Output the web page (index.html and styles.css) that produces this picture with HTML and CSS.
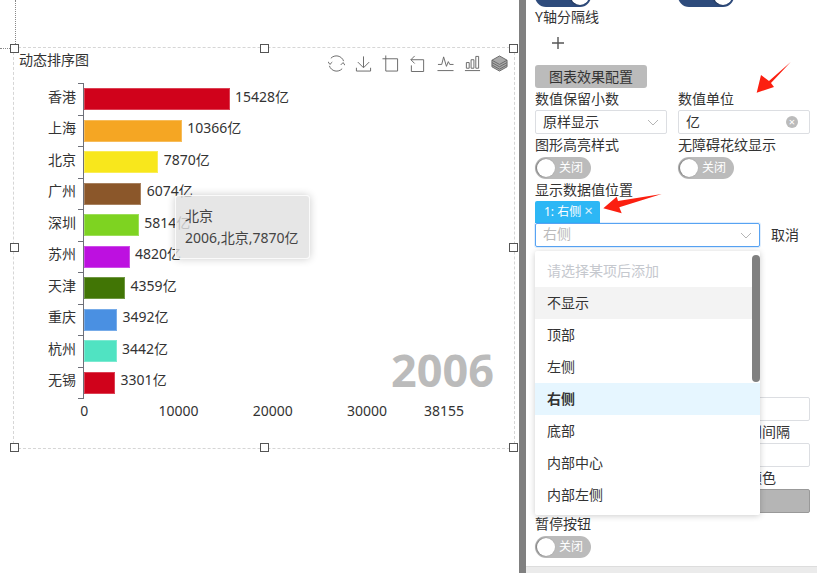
FILE: index.html
```html
<!DOCTYPE html>
<html lang="zh-CN">
<head>
    <meta charset="UTF-8">
    <meta name="viewport" content="width=device-width, initial-scale=1.0">
    <title>动态排序图配置</title>
    <link rel="stylesheet" href="styles.css">
</head>
<body>
    <div class="stage">
        <div class="guide-v"></div>
        <div class="guide-h"></div>

        <div class="chart-box">
            <span class="handle h-tl"></span><span class="handle h-tc"></span><span class="handle h-tr"></span>
            <span class="handle h-ml"></span><span class="handle h-mr"></span>
            <span class="handle h-bl"></span><span class="handle h-bc"></span><span class="handle h-br"></span>

            <div class="chart-head">
                <div class="chart-title">动态排序图</div>
                <div class="toolbox">
                    <svg viewBox="0 0 18 18"><path d="M1.500 11.500A8 8 0 0 0 15 14.500M16.500 6.500A8 8 0 0 0 3 3.500"/><path d="M0 7 2 10 4.500 7.500M18 11 16 8 13.500 10.500"/></svg>
                    <svg viewBox="0 0 18 18"><path d="M9 1.500V13M3 7.500 9 13.500 15 7.500M1.500 13.500V17H16.500V13.500"/></svg>
                    <svg viewBox="0 0 18 18"><path d="M0.500 4H16.500V17H4V0.500"/></svg>
                    <svg viewBox="0 0 18 18"><path d="M6 1 2 5 6 9M2 5H15.500V17.500H2.500V11"/></svg>
                    <svg viewBox="0 0 18 18"><path d="M1 10H5L7 2 10 12 12 7 13.500 10H17.500M0.500 16.500H17.500"/></svg>
                    <svg viewBox="0 0 18 18"><path d="M2.500 14V8H5.500V14ZM7.500 14V5H10.500V14ZM12.500 14V1.500H15.500V14ZM1 16.500H17"/></svg>
                    <svg class="stack" viewBox="0 0 18 18"><path d="M9 1 17 5.500V12.500L9 17 1 12.500V5.500Z"/><path d="M1 5.500 9 10 17 5.500M1 8 9 12.500 17 8M1 10.500 9 15 17 10.500"/></svg>
                </div>
            </div>

            <div class="plot">
                <div class="row"><span class="name">香港</span><span class="bar" style="width:145.5px;background:#d0021b"></span><span class="val">15428亿</span></div>
                <div class="row"><span class="name">上海</span><span class="bar" style="width:97.8px;background:#f5a623"></span><span class="val">10366亿</span></div>
                <div class="row"><span class="name">北京</span><span class="bar" style="width:74.2px;background:#f8e71c"></span><span class="val">7870亿</span></div>
                <div class="row"><span class="name">广州</span><span class="bar" style="width:57.3px;background:#8b572a"></span><span class="val">6074亿</span></div>
                <div class="row"><span class="name">深圳</span><span class="bar" style="width:54.8px;background:#7ed321"></span><span class="val">5814亿</span></div>
                <div class="row"><span class="name">苏州</span><span class="bar" style="width:45.5px;background:#bd10e0"></span><span class="val">4820亿</span></div>
                <div class="row"><span class="name">天津</span><span class="bar" style="width:41.1px;background:#417505"></span><span class="val">4359亿</span></div>
                <div class="row"><span class="name">重庆</span><span class="bar" style="width:32.9px;background:#4a90e2"></span><span class="val">3492亿</span></div>
                <div class="row"><span class="name">杭州</span><span class="bar" style="width:32.5px;background:#50e3c2"></span><span class="val">3442亿</span></div>
                <div class="row"><span class="name">无锡</span><span class="bar" style="width:31.1px;background:#d0021b"></span><span class="val">3301亿</span></div>
            </div>

            <div class="x-axis">
                <span style="width:94.3px">0</span>
                <span style="width:94.3px">10000</span>
                <span style="width:94.3px">20000</span>
                <span style="width:94.3px">30000</span>
                <span style="width:59.6px">38155</span>
            </div>

            <div class="year">2006</div>

            <div class="tooltip">
                <div>北京</div>
                <div>2006,北京,7870亿</div>
            </div>
        </div>
    </div>

    <div class="divider"></div>

    <div class="panel">
        <div class="form-row top-row">
            <div class="cell"><span class="switch switch-on"><i></i></span></div>
            <div class="cell"><span class="switch switch-on"><i></i></span></div>
        </div>
        <div class="label">Y轴分隔线</div>
        <div class="plus"><svg viewBox="0 0 12 12"><path d="M6 0V12M0 6H12"/></svg></div>
        <div class="section-btn">图表效果配置</div>

        <div class="form-row">
            <div class="cell">
                <div class="label">数值保留小数</div>
                <div class="select">原样显示<svg class="arrow" viewBox="0 0 12 7"><path d="M1 1 6 6 11 1"/></svg></div>
            </div>
            <div class="cell">
                <div class="label">数值单位</div>
                <div class="select">亿<span class="clear">×</span></div>
            </div>
        </div>

        <div class="form-row">
            <div class="cell">
                <div class="label">图形高亮样式</div>
                <span class="switch"><i></i><b>关闭</b></span>
            </div>
            <div class="cell">
                <div class="label">无障碍花纹显示</div>
                <span class="switch"><i></i><b>关闭</b></span>
            </div>
        </div>

        <div class="label">显示数据值位置</div>
        <div class="tag">1: 右侧 <span class="tag-x">×</span></div>
        <div class="add-row">
            <div class="select select-active">右侧<svg class="arrow" viewBox="0 0 12 7"><path d="M1 1 6 6 11 1"/></svg></div>
            <span class="cancel">取消</span>
        </div>

        <div class="form-row behind-first">
            <div class="cell"></div>
            <div class="cell">
                <div class="select"></div>
                <div class="label">柱状图同类别间隔</div>
                <div class="select"></div>
                <div class="label">柱状图背景颜色</div>
                <div class="color-box"></div>
            </div>
        </div>

        <div class="label">暂停按钮</div>
        <span class="switch"><i></i><b>关闭</b></span>

        <div class="panel-foot"></div>

        <div class="dropdown">
            <div class="thumb"></div>
            <div class="opt opt-muted">请选择某项后添加</div>
            <div class="opt opt-hover">不显示</div>
            <div class="opt">顶部</div>
            <div class="opt">左侧</div>
            <div class="opt opt-selected">右侧</div>
            <div class="opt">底部</div>
            <div class="opt">内部中心</div>
            <div class="opt">内部左侧</div>
        </div>
    </div>

    <!-- 标注箭头 -->
    <svg class="marks" viewBox="0 0 817 573">
        <polygon points="790.700,62 769,81 761,75 756.700,92.700 774,87 771,83"/>
        <polygon points="661.700,194 618,201 616.700,196.700 603.300,208.300 621.700,213.300 619.300,207.300"/>
    </svg>
</body>
</html>
```

FILE: styles.css
```css
* { box-sizing: border-box; }
html, body {
    margin: 0;
    height: 573px;
    overflow: hidden;
}
body {
    display: flex;
    position: relative;
    background: white;
    color: #333;
    font-family: "Noto Sans", "Noto Sans CJK SC", sans-serif;
    font-size: 14px;
}

/* left canvas */
.stage {
    width: 519px;
    position: relative;
    flex: none;
}
.guide-v {
    position: absolute;
    left: 15px;
    top: 0;
    height: 44px;
    border-left: 1px dotted #888;
}
.guide-h {
    position: absolute;
    left: 0;
    top: 48px;
    width: 10px;
    border-top: 1px dotted #888;
}
.chart-box {
    position: absolute;
    left: 13px;
    top: 47px;
    width: 502px;
    height: 402px;
    border: 1px dashed #d6d6d6;
}
.handle {
    position: absolute;
    width: 9px;
    height: 9px;
    background: white;
    border: 1px solid #555;
    z-index: 3;
}
.h-tl { left: -4px; top: -4px; }
.h-tc { left: 246px; top: -4px; }
.h-tr { right: -4px; top: -4px; }
.h-ml { left: -4px; top: 195px; }
.h-mr { right: -4px; top: 195px; }
.h-bl { left: -4px; bottom: -4px; }
.h-bc { left: 246px; bottom: -4px; }
.h-br { right: -4px; bottom: -4px; }

.chart-head {
    display: flex;
    justify-content: space-between;
    padding: 2px 6px 0 5px;
    height: 35px;
}
.chart-title {
    line-height: 20px;
    color: #333;
}
.toolbox {
    display: flex;
    gap: 10.2px;
    padding-top: 5px;
}
.toolbox svg {
    width: 17px;
    height: 17px;
    fill: none;
    stroke: #666;
    stroke-width: 1;
}
.toolbox .stack { fill: #aaa; }

.plot {
    margin-left: 69px;
    width: 400px;
    border-left: 1px solid #6e7079;
    height: 316px;
}
.row {
    display: flex;
    align-items: center;
    height: 31.500px;
    position: relative;
    border-top: 1px solid transparent;
}
.row::before {
    content: "";
    position: absolute;
    left: -6px;
    top: -1px;
    width: 6px;
    height: 1px;
    background: #6e7079;
}
.row:last-child::after {
    content: "";
    position: absolute;
    left: -6px;
    bottom: -1px;
    width: 6px;
    height: 1px;
    background: #6e7079;
}
.name {
    position: absolute;
    right: 100%;
    margin-right: 8px;
    padding-bottom: 7px;
    white-space: nowrap;
}
.bar {
    height: 22px;
    border: 1px solid rgba(255,255,255,0.25);
}
.val {
    margin-left: 5.5px;
    padding-bottom: 7px;
    white-space: nowrap;
}
.x-axis {
    display: flex;
    margin-left: 23px;
    margin-top: 2px;
    line-height: 20px;
}
.x-axis span { text-align: center; }
.year {
    position: absolute;
    right: 20px;
    top: 292px;
    font-size: 45px;
    line-height: 60px;
    font-weight: bold;
    color: #bbb;
}
.tooltip {
    position: absolute;
    left: 161px;
    top: 147px;
    width: 135px;
    height: 64px;
    padding: 9px 9px;
    background: rgba(224,224,224,0.82);
    border: 1px solid rgba(255,255,255,0.8);
    border-radius: 4px;
    box-shadow: 0 0 8px rgba(0,0,0,0.2);
    color: #444;
    line-height: 22px;
    white-space: nowrap;
    z-index: 2;
}

.divider {
    width: 7px;
    background: #808080;
    flex: none;
}

/* right panel */
.panel {
    flex: 1;
    position: relative;
    padding-left: 9px;
}
.form-row { display: flex; }
.cell { width: 143px; flex: none; }
.top-row { margin-top: -16px; height: 22px; }
.label {
    line-height: 22px;
    height: 22px;
    white-space: nowrap;
}
.plus {
    height: 32px;
    padding: 9px 0 0 17px;
}
.plus svg {
    display: block;
    width: 12px;
    height: 12px;
    fill: none;
    stroke: #555;
    stroke-width: 1.4;
}
.section-btn {
    width: 112px;
    height: 23px;
    line-height: 23px;
    margin-top: 5px;
    text-align: center;
    background: #bbb;
    border-radius: 3px;
    color: #333;
}
.select {
    width: 132px;
    height: 24px;
    line-height: 22px;
    padding-left: 7px;
    border: 1px solid #dcdee2;
    border-radius: 2px;
    position: relative;
}
.arrow {
    position: absolute;
    right: 7px;
    top: 8px;
    width: 12px;
    height: 7px;
    fill: none;
    stroke: #b5b5b5;
}
.clear {
    position: absolute;
    right: 11px;
    top: 5px;
    width: 12px;
    height: 12px;
    border-radius: 50%;
    background: #bbb;
    color: white;
    font-size: 11px;
    line-height: 12px;
    text-align: center;
}
.switch {
    display: block;
    width: 56px;
    height: 22px;
    margin-top: 1px;
    border-radius: 11px;
    background: #bbb;
    position: relative;
}
.switch i {
    position: absolute;
    left: 2px;
    top: 2px;
    width: 18px;
    height: 18px;
    border-radius: 50%;
    background: white;
    box-shadow: -1px 0 2px rgba(0,0,0,0.4);
}
.switch b {
    position: absolute;
    left: 24px;
    top: 0;
    font-size: 12px;
    font-weight: normal;
    line-height: 22px;
    color: white;
}
.switch-on { background: #2e4b7c; }
.switch-on i { left: auto; right: 2px; }
.tag {
    width: 65px;
    height: 22px;
    line-height: 22px;
    padding-left: 9px;
    background: #2db7f5;
    border-radius: 2px 2px 0 0;
    color: white;
    font-size: 12px;
    white-space: nowrap;
}
.tag-x {
    font-size: 15px;
    line-height: 15px;
    opacity: 0.8;
}
.add-row {
    display: flex;
    align-items: center;
    gap: 11px;
}
.select-active {
    width: 225px;
    line-height: 20px;
    border-color: #57a3f3;
    box-shadow: 0 0 0 1px rgba(45,140,240,0.15);
    color: #bbb;
}
.cancel { padding-bottom: 3px; }
.behind-first { margin-top: 150px; }
.color-box {
    width: 132px;
    height: 24px;
    background: #b5b5b5;
    border: 1px solid #999;
    border-radius: 2px;
}
.panel-foot {
    position: absolute;
    left: 0;
    right: 0;
    top: 566px;
    height: 7px;
    background: #ebebeb;
    border-top: 1px solid #ddd;
}
.dropdown {
    position: absolute;
    left: 9px;
    top: 251px;
    width: 225px;
    height: 264px;
    padding-top: 4px;
    background: white;
    box-shadow: 0 1px 6px rgba(0,0,0,0.2);
    border-radius: 2px;
    overflow: hidden;
}
.thumb {
    position: absolute;
    right: 0;
    top: 4px;
    width: 8px;
    height: 127px;
    border-radius: 4px;
    background: #808080;
    z-index: 1;
}
.opt {
    height: 32px;
    line-height: 32px;
    padding-left: 12px;
    color: #333;
}
.opt-muted { color: #c5c8ce; }
.opt-hover { background: #f3f3f3; }
.opt-selected {
    background: #e6f6ff;
    font-weight: bold;
}

.marks {
    position: absolute;
    left: 0;
    top: 0;
    width: 817px;
    height: 573px;
    pointer-events: none;
}
.marks polygon { fill: #fb1f10; }
```
